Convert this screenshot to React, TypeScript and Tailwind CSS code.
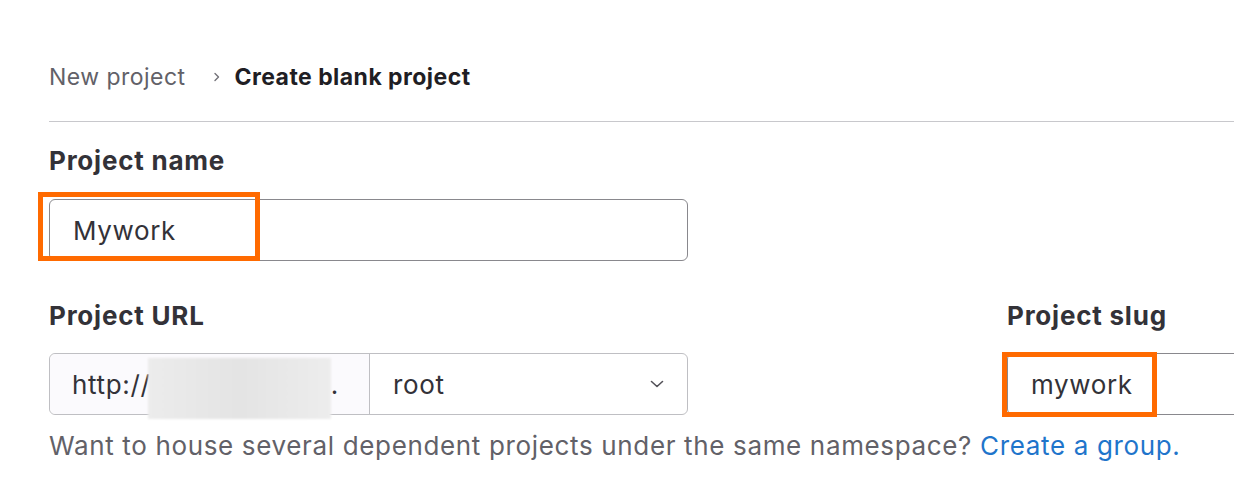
import React from 'react';

export default function App() {
  return (
    <div className="relative w-[1234px] h-[480px] overflow-hidden bg-white font-['Inter','Liberation_Sans',sans-serif] text-[#333238]">
      <div className="pl-[49px]">
        {/* Breadcrumb */}
        <nav className="pt-[60px] flex items-center h-[94px] leading-[34px] text-[23px] tracking-[0.02em]">
          <span className="text-[#626168]">New project</span>
          <svg className="ml-[28px] mr-[13px]" width="8" height="10" viewBox="0 0 8 10" fill="none">
            <path d="M2 1.5 L5.5 5 L2 8.5" stroke="#737278" strokeWidth="1.4" strokeLinecap="round" strokeLinejoin="round" />
          </svg>
          <span className="font-bold text-[#1f1e24]">Create blank project</span>
        </nav>
        <div className="mt-[27px] h-px bg-[#c8c8cc] w-[1300px]" />

        {/* Project name */}
        <label className="block mt-[23px] leading-[32px] text-[26px] font-bold tracking-[0.03em]">Project name</label>
        <div className="mt-[22px] w-[639px] h-[62px] border border-[#89888d] rounded-[6px] flex items-center pl-[23px] text-[26px] tracking-[0.025em]">
          Mywork
        </div>

        {/* URL + slug row */}
        <div className="flex mt-[39px] w-[1400px]">
          <div className="w-[639px] shrink-0">
            <label className="block leading-[32px] text-[26px] font-bold tracking-[0.03em]">Project URL</label>
            <div className="mt-[21px] h-[62px] flex border border-[#bfbfc3] rounded-[6px] text-[26px] tracking-[0.025em]">
              <div className="w-[320px] shrink-0 bg-[#fbfafd] rounded-l-[6px] border-r border-[#bfbfc3] flex items-center pl-[22px]">
                <span>http://</span>
                <span className="ml-auto mr-[30px]">.</span>
              </div>
              <div className="flex-1 flex items-center pl-[23px] pr-[22px]">
                <span>root</span>
                <svg className="ml-auto" width="16" height="16" viewBox="0 0 16 16" fill="none">
                  <path d="M2.5 5.5 L8 10.5 L13.5 5.5" stroke="#535158" strokeWidth="1.6" strokeLinecap="round" strokeLinejoin="round" />
                </svg>
              </div>
            </div>
          </div>
          <div className="ml-[319px] w-[639px] shrink-0">
            <label className="block leading-[32px] text-[26px] font-bold tracking-[0.03em]">Project slug</label>
            <div className="mt-[21px] h-[62px] border border-[#89888d] rounded-[6px] flex items-center pl-[23px] text-[26px] tracking-[0.025em]">
              mywork
            </div>
          </div>
        </div>

        <p className="mt-[15px] leading-[32px] text-[26px] tracking-[0.025em] text-[#626168] whitespace-nowrap">
          Want to house several dependent projects under the same namespace?{' '}
          <a href="#" className="text-[#1f75cb]">Create a group.</a>
        </p>
      </div>

      {/* Redacted host */}
      <div className="absolute left-[148px] top-[358px] w-[183px] h-[61px] bg-gradient-to-r from-[#ececec] via-[#e4e4e4] to-[#ededed] blur-[1px]" />

      {/* Highlight boxes */}
      <div className="absolute left-[38px] top-[192px] w-[222px] h-[69px] border-[5px] border-[#ff6a00]" />
      <div className="absolute left-[1002px] top-[352px] w-[155px] h-[65px] border-[5px] border-[#ff6a00]" />
    </div>
  );
}
